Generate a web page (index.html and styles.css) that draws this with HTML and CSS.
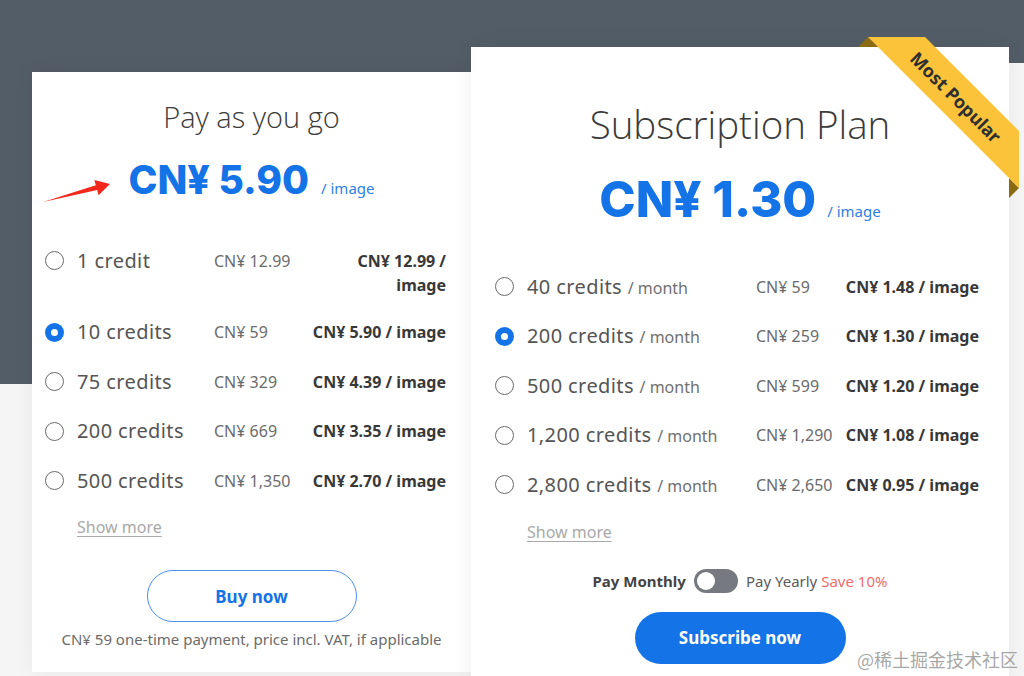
FILE: index.html
```html
<!DOCTYPE html>
<html lang="en">
<head>
<meta charset="utf-8">
<title>Pricing</title>
<link rel="stylesheet" href="styles.css">
</head>
<body>
<main class="page">
  <section class="card card-payg">
    <svg class="arrow" width="72" height="29" viewBox="0 0 72 29" aria-hidden="true">
      <polygon points="3,26 55.8,9.2 54.4,3.9 70,8 58.6,19.3 57.2,14" fill="#f2281d"/>
    </svg>
    <h2 class="plan-title">Pay as you go</h2>
    <div class="price">
      <span class="price-amount">CN¥ 5.90</span>
      <span class="price-unit">/ image</span>
    </div>
    <ul class="options options-payg">
      <li class="option option-wrap"><span class="radio"></span><span class="opt-label">1 credit</span><span class="opt-price">CN¥ 12.99</span><span class="opt-unit">CN¥ 12.99 /<br>image</span></li>
      <li class="option"><span class="radio checked"></span><span class="opt-label">10 credits</span><span class="opt-price">CN¥ 59</span><span class="opt-unit">CN¥ 5.90 / image</span></li>
      <li class="option"><span class="radio"></span><span class="opt-label">75 credits</span><span class="opt-price">CN¥ 329</span><span class="opt-unit">CN¥ 4.39 / image</span></li>
      <li class="option"><span class="radio"></span><span class="opt-label">200 credits</span><span class="opt-price">CN¥ 669</span><span class="opt-unit">CN¥ 3.35 / image</span></li>
      <li class="option"><span class="radio"></span><span class="opt-label">500 credits</span><span class="opt-price">CN¥ 1,350</span><span class="opt-unit">CN¥ 2.70 / image</span></li>
    </ul>
    <div class="show-more show-more-payg"><a class="show-link">Show more</a></div>
    <div class="cta cta-payg"><button class="btn btn-outline">Buy now</button></div>
    <p class="note">CN¥ 59 one-time payment, price incl. VAT, if applicable</p>
  </section>

  <section class="card card-sub">
    <svg class="ribbon" width="165" height="165" viewBox="0 0 165 165" aria-hidden="true">
      <polygon points="13,2 3,12 23,12" fill="#8a6a12"/>
      <polygon points="154,143 164,153 154,163" fill="#8a6a12"/>
      <polygon points="13,2 70,2 164,96 164,153" fill="#fbc33a"/>
      <text class="ribbon-text" x="101" y="62" transform="rotate(45 101 62)" text-anchor="middle" dominant-baseline="central">Most Popular</text>
    </svg>
    <h2 class="plan-title plan-title-sub">Subscription Plan</h2>
    <div class="price price-sub">
      <span class="price-amount price-amount-sub">CN¥ 1.30</span>
      <span class="price-unit">/ image</span>
    </div>
    <ul class="options options-sub">
      <li class="option"><span class="radio"></span><span class="opt-label">40 credits <small>/ month</small></span><span class="opt-price">CN¥ 59</span><span class="opt-unit">CN¥ 1.48 / image</span></li>
      <li class="option"><span class="radio checked"></span><span class="opt-label">200 credits <small>/ month</small></span><span class="opt-price">CN¥ 259</span><span class="opt-unit">CN¥ 1.30 / image</span></li>
      <li class="option"><span class="radio"></span><span class="opt-label">500 credits <small>/ month</small></span><span class="opt-price">CN¥ 599</span><span class="opt-unit">CN¥ 1.20 / image</span></li>
      <li class="option"><span class="radio"></span><span class="opt-label">1,200 credits <small>/ month</small></span><span class="opt-price">CN¥ 1,290</span><span class="opt-unit">CN¥ 1.08 / image</span></li>
      <li class="option"><span class="radio"></span><span class="opt-label">2,800 credits <small>/ month</small></span><span class="opt-price">CN¥ 2,650</span><span class="opt-unit">CN¥ 0.95 / image</span></li>
    </ul>
    <div class="show-more show-more-sub"><a class="show-link">Show more</a></div>
    <div class="billing">
      <span class="billing-monthly">Pay Monthly</span>
      <span class="toggle"><span class="toggle-knob"></span></span>
      <span class="billing-yearly">Pay Yearly <span class="save">Save 10%</span></span>
    </div>
    <div class="cta cta-sub"><button class="btn btn-solid">Subscribe now</button></div>
    <p class="note note-sub">CN¥ 259 per month, price incl. VAT, if applicable</p>
  </section>

  <div class="filler"></div>
</main>
<div class="watermark">@稀土掘金技术社区</div>
</body>
</html>
```

FILE: styles.css
```css
* {
  box-sizing: border-box;
  margin: 0;
  padding: 0;
}

body {
  width: 1024px;
  height: 676px;
  overflow: hidden;
  position: relative;
  background: linear-gradient(#535d68 0, #535d68 384px, #f5f5f6 384px);
  font-family: "Noto Sans", "Liberation Sans", sans-serif;
  color: #444;
}

.page {
  display: flex;
  align-items: flex-start;
  height: 676px;
  padding: 72px 0 0 32px;
}

.card {
  position: relative;
  flex: none;
  background: #fff;
  box-shadow: 0 0 20px rgba(0, 0, 0, 0.06);
}

.card-payg {
  width: 439px;
  height: 600px;
  padding-top: 27px;
}

.card-sub {
  width: 538px;
  height: 660px;
  margin-top: -25px;
  padding-top: 53px;
}

.filler {
  flex: 1;
  align-self: stretch;
  margin-top: -9px;
  background: #f5f5f6;
}

.arrow {
  position: absolute;
  left: 8px;
  top: 104px;
}

.ribbon {
  position: absolute;
  top: -12px;
  right: -11px;
  overflow: visible;
}

.ribbon-text {
  font-family: "Noto Sans", sans-serif;
  font-weight: 700;
  font-size: 18px;
  fill: #2f2f2f;
}

.plan-title {
  font-family: "Open Sans", sans-serif;
  font-weight: 300;
  font-size: 29px;
  line-height: 36px;
  color: #3b3b3b;
  text-align: center;
}

.plan-title-sub {
  font-size: 38.5px;
  line-height: 48px;
}

.price {
  display: flex;
  justify-content: center;
  align-items: baseline;
  gap: 12px;
  margin-top: 21px;
}

.price-sub {
  gap: 11px;
  margin-top: 22px;
}

.price-amount {
  font-family: Inter, sans-serif;
  font-weight: 800;
  font-size: 39px;
  line-height: 48px;
  color: #1473e6;
}

.price-amount-sub {
  font-size: 49px;
  line-height: 60px;
}

.price-unit {
  font-size: 15px;
  color: #2e80e4;
}

.options {
  list-style: none;
  margin-top: 32px;
}

.options-payg {
  padding: 0 25px 0 13px;
}

.options-sub {
  padding: 0 30px 0 24px;
}

.option {
  display: grid;
  align-items: start;
  height: 49.5px;
  padding: 12.75px 0;
  line-height: 24px;
}

.options-payg .option {
  grid-template-columns: 32px 137px 1fr auto;
}

.options-sub .option {
  grid-template-columns: 32px 229px 1fr auto;
}

.option-wrap {
  height: 71.25px;
}

.radio {
  width: 19px;
  height: 19px;
  margin-top: 2.5px;
  border: 1.5px solid #6a6a6a;
  border-radius: 50%;
}

.radio.checked {
  border: 6px solid #1473e6;
  background: #fff;
}

.opt-label {
  height: 24px;
  font-size: 20px;
  letter-spacing: 0.4px;
  color: #555;
  white-space: nowrap;
}

.opt-label small {
  font-size: 16px;
  line-height: 1;
  letter-spacing: 0;
  color: #707070;
}

.opt-price {
  font-size: 16px;
  color: #6b6b6b;
  white-space: nowrap;
}

.opt-unit {
  font-size: 16px;
  font-weight: 700;
  color: #383838;
  text-align: right;
  white-space: nowrap;
}

.show-more {
  margin-top: 10px;
  line-height: 24px;
}

.show-more-payg {
  padding-left: 45px;
}

.show-more-sub {
  padding-left: 56px;
}

.show-link {
  font-size: 16px;
  color: #a9a9a9;
  text-decoration: underline;
  text-underline-offset: 3px;
}

.billing {
  display: flex;
  justify-content: center;
  align-items: center;
  gap: 8px;
  height: 24px;
  margin-top: 25px;
  font-size: 15px;
}

.billing-monthly {
  font-weight: 700;
  color: #444;
}

.billing-yearly {
  color: #5a5a5a;
}

.save {
  color: #f26d6d;
}

.toggle {
  position: relative;
  width: 44px;
  height: 24px;
  border-radius: 12px;
  background: #767a80;
}

.toggle-knob {
  position: absolute;
  left: 3px;
  top: 3px;
  width: 18px;
  height: 18px;
  border-radius: 50%;
  background: #fff;
}

.cta {
  display: flex;
  justify-content: center;
}

.cta-payg {
  margin-top: 31px;
}

.cta-sub {
  margin-top: 19px;
}

.btn {
  width: 210px;
  height: 52px;
  border-radius: 26px;
  font-family: "Noto Sans", sans-serif;
  font-size: 17px;
  font-weight: 700;
  cursor: pointer;
}

.btn-outline {
  background: #fff;
  color: #1473e6;
  border: 1px solid #4a8fe8;
}

.btn-solid {
  width: 211px;
  background: #1473e6;
  color: #fff;
  border: none;
}

.note {
  margin-top: 7px;
  font-size: 15px;
  line-height: 20px;
  color: #6b6b6b;
  text-align: center;
}

.watermark {
  position: absolute;
  right: 6px;
  bottom: 5px;
  font-family: "Noto Sans CJK SC", sans-serif;
  font-size: 18px;
  line-height: 24px;
  color: rgba(150, 150, 150, 0.85);
}
```
